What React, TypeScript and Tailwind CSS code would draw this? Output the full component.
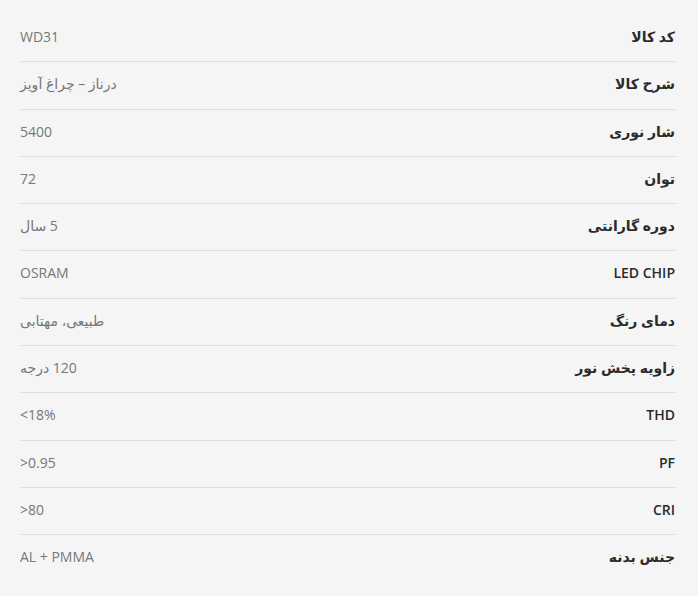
const specs: { label: string; value: string }[] = [
  { label: "کد کالا", value: "WD31" },
  { label: "شرح کالا", value: "درناز – چراغ آویز" },
  { label: "شار نوری", value: "5400" },
  { label: "توان", value: "72" },
  { label: "دوره گارانتی", value: "5 سال" },
  { label: "LED CHIP", value: "OSRAM" },
  { label: "دمای رنگ", value: "طبیعی، مهتابی" },
  { label: "زاویه پخش نور", value: "120 درجه" },
  { label: "THD", value: "<18%" },
  { label: "PF", value: ">0.95" },
  { label: "CRI", value: ">80" },
  { label: "جنس بدنه", value: "AL + PMMA" },
];

const App = () => {
  return (
    <div
      dir="rtl"
      className="min-h-[596px] w-[698px] bg-[#f5f5f5] pr-[22px] pl-[20px] pt-[15px]"
      style={{ fontFamily: '"Open Sans", "DejaVu Sans", sans-serif' }}
    >
      {specs.map((s, i) => (
        <div
          key={s.label}
          className={`flex h-[47.3px] items-start justify-between pt-[12px] ${
            i < specs.length - 1 ? "border-b border-[#dedede]" : ""
          }`}
        >
          <span className="pr-px text-[14px] leading-[20px] font-semibold text-[#2b2b2b]">
            {s.label}
          </span>
          <span className="text-[14px] leading-[20px] text-[#777]">
            <bdi>{s.value}</bdi>
          </span>
        </div>
      ))}
    </div>
  );
};

export default App;
